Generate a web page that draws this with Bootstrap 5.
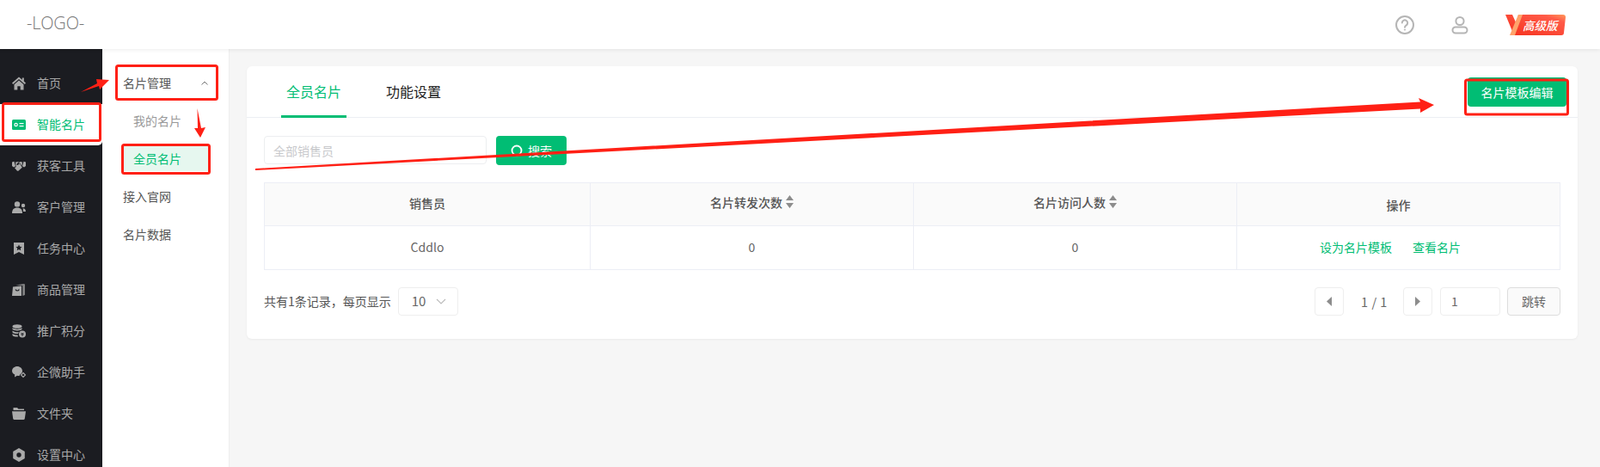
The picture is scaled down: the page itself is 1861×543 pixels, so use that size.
<!DOCTYPE html>
<html lang="en">
<head>
  <meta charset="UTF-8">
  <title>全员名片</title>
  <link href="https://cdn.jsdelivr.net/npm/bootstrap@5.3.3/dist/css/bootstrap.min.css" rel="stylesheet" />
  <style>
    body { width: 1861px; height: 543px; overflow: hidden; position: relative; background: #f6f6f6; font-family: "Noto Sans CJK SC", "Liberation Sans", sans-serif; font-size: 14px; color: #555; }
    .top-bar { height: 57px; background: #fff; box-shadow: 0 1px 5px rgba(0,0,0,.08); position: relative; z-index: 2; padding: 0 40px 0 31px; }
    .logo-text { font-family: "Open Sans", sans-serif; font-size: 20px; color: #777; letter-spacing: -.2px; font-weight: 300; margin-top: -3px; }
    .icon-user { margin-left: 43px; }
    .vip-badge { width: 70px; height: 24px; margin-left: 43px; position: relative; }
    .vip-badge svg { display: block; }
    .vip-text { position: absolute; left: 20px; top: 2px; line-height: 20px; color: #fff; font-size: 13.5px; font-style: italic; font-weight: 500; }
    .app-body { height: 486px; }
    .side-dark { width: 119px; background: #1b1c21; padding-top: 16px; flex: none; }
    .side-item { height: 48px; padding-left: 14px; gap: 13px; color: #a9a9a9; }
    .side-item svg { flex: none; }
    .side-item span { margin-top: -2px; }
    .side-item.is-on { background: #fff; color: #01bd74; border-radius: 0 0 5px 0; }
    .side-sub { width: 148px; background: #fff; border-right: 1px solid #eee; flex: none; padding: 19px 0 0 24px; color: #555; }
    .sub-head { height: 43px; width: 99px; margin-bottom: 5px; padding-bottom: 2px; }
    .sub-link { height: 30px; width: 100px; padding-left: 12px; color: #999; border-radius: 2px; }
    .sub-link.is-on { background: #e6f7ef; color: #01bd74; }
    .sub-mine { height: 32px; margin-bottom: 13px; }
    .sub-plain { height: 44px; }
    .sub-first { margin-top: 7px; }
    .page-main { padding: 20px 26px 0 20px; }
    .panel-card { height: 317px; border: 0; border-radius: 6px; box-shadow: 0 1px 3px rgba(0,0,0,.05); }
    .panel-top { height: 60px; border-bottom: 1px solid #eceef3; padding: 13px 13px 0 40px; }
    .tab-on, .tab-off { height: 60px; margin-top: -13px; font-size: 16px; line-height: 58px; text-align: center; color: #222; }
    .tab-on { width: 76px; color: #01bd74; border-bottom: 3px solid #01bd74; margin-right: 43px; }
    .tab-off { width: 70px; }
    .btn-green { background: #01bd74; border: 0; color: #fff; border-radius: 4px; font-size: 14px; }
    .btn-green:hover { background: #01bd74; color: #fff; }
    .btn-tpl { width: 115px; height: 34px; padding: 1px 0 0; }
    .panel-inner { padding: 21px 20px 0; }
    .search-box { width: 259px; height: 33px; border: 1px solid #eceef0; border-radius: 4px; font-size: 14px; padding: 0 10px; }
    .search-box::placeholder { color: #c8c9cc; }
    .btn-find { width: 82px; height: 34px; margin-left: 11px; padding: 0; gap: 6px; }
    .data-table { table-layout: fixed; width: 1508px; margin: 20px 0 0; border-color: #eceef5; color: #666; }
    .col-seller { width: 379px; }
    .col-mid { width: 376px; }
    .data-table th { height: 50px; background: #fafafa; color: #555; font-weight: 500; text-align: center; vertical-align: middle; padding: 0 0 3px; }
    .data-table th.no-sort { padding: 2px 0 0; }
    .data-table th.has-sort { padding: 0 0 5px; }
    .data-table td { height: 51px; text-align: center; vertical-align: middle; padding: 0 0 2px; color: #666; }
    .data-table td.cell-actions { padding-right: 19px; }
    .sort-mark { display: inline-block; vertical-align: -1px; margin-left: 4px; }
    .green-link { color: #01bd74; text-decoration: none; }
    .pager-row { margin-top: 20px; height: 33px; }
    .box-plain { height: 33px; border: 1px solid #eee; border-radius: 4px; background: #fff; }
    .page-size { width: 70px; margin-left: 8px; padding-left: 15px; font-size: 15px; color: #666; gap: 12px; }
    .page-arrow { width: 34px; }
    .page-info { width: 69px; padding-left: 2px; text-align: center; font-size: 14.5px; color: #666; letter-spacing: .5px; }
    .page-jump { width: 70px; margin-left: 9px; padding-left: 12px; color: #666; }
    .btn-jump { width: 62px; height: 33px; margin-left: 8px; padding: 0; background: #fafafa; border: 1px solid #ddd; border-radius: 4px; font-size: 14px; color: #666; }
    .note-layer { position: absolute; left: 0; top: 0; z-index: 5; pointer-events: none; }
  </style>
</head>
<body>
  <header class="top-bar d-flex align-items-center justify-content-between">
    <div class="logo-text">-LOGO-</div>
    <div class="d-flex align-items-center">
      <svg width="22" height="22" viewBox="0 0 22 22" fill="none" stroke="#b5b5b5" stroke-width="2">
        <circle cx="11" cy="11" r="10"/>
        <path d="M7.8 8.600a3.200 3.200 0 1 1 4.900 2.700c-1.100.7-1.700 1.200-1.700 2.400" stroke-linecap="round"/>
        <circle cx="11" cy="16.600" r=".6" fill="#b5b5b5" stroke-width="1"/>
      </svg>
      <svg class="icon-user" width="20" height="22" viewBox="0 0 20 22" fill="none" stroke="#b5b5b5" stroke-width="2">
        <circle cx="10" cy="6.500" r="4.600"/>
        <rect x="1.500" y="13.500" width="17" height="7" rx="3.500"/>
      </svg>
      <div class="vip-badge">
        <svg width="70" height="24" viewBox="0 0 70 24">
          <defs>
            <linearGradient id="vipFill" x1="0" y1="1" x2="1" y2="0">
              <stop offset="0" stop-color="#f5301c"/>
              <stop offset=".8" stop-color="#ff5a48"/>
              <stop offset="1" stop-color="#ff9a5c"/>
            </linearGradient>
          </defs>
          <path d="M15 0H67a3 3 0 0 1 3 3L68 21a3 3 0 0 1-3 3H10L0 0H8l5 11z" fill="url(#vipFill)"/>
          <path d="M5 24L15 0h5L11 24z" fill="#ffa36b"/>
        </svg>
        <span class="vip-text">高级版</span>
      </div>
    </div>
  </header>

  <div class="app-body d-flex">
    <nav class="side-dark">
      <div class="side-item d-flex align-items-center">
        <svg width="16" height="16" viewBox="0 0 16 16" fill="#aaa"><path d="M8 0.500L0 7.600l1.200 1.300L8 3l6.800 5.900L16 7.600l-2.200-2V1.500h-2v2.300zM2.500 9.300V15.500h3.800v-4.300h3.400v4.300h3.800V9.300L8 4.500z"/></svg>
        <span>首页</span>
      </div>
      <div class="side-item is-on d-flex align-items-center">
        <svg width="16" height="12" viewBox="0 0 16 12"><rect width="16" height="12" rx="1.500" fill="#01bd74"/><circle cx="4.600" cy="6" r="1.700" fill="none" stroke="#fff" stroke-width="1.200"/><path d="M8.500 4h5v1.300h-5zM8.500 7h5v1.300h-5z" fill="#fff"/></svg>
        <span>智能名片</span>
      </div>
      <div class="side-item d-flex align-items-center">
        <svg width="16" height="12" viewBox="0 0 16 12" fill="#aaa"><path d="M0 1.500L2.500.8 4 6.300 2 7.500 0 6z"/><path d="M16 1.500L13.500.8 12 6.300l2 1.200L16 6z"/><path d="M4 1.600C5.500 1.700 6.500 1 8 1L5.600 3.400c-.7.900.5 2 1.500 1.300L8.800 3.300l3 4.400-4.200 3.800c-.6.500-1.300.4-1.800-.1L3 8.200l1.700-1.300z"/><path d="M9 1c1 0 2 .3 3 .6L11.300 6 9 2.400 7.400 3.700z"/></svg>
        <span>获客工具</span>
      </div>
      <div class="side-item d-flex align-items-center">
        <svg width="16" height="14" viewBox="0 0 16 14" fill="#aaa"><circle cx="6" cy="3.400" r="3.200"/><path d="M0 14c0-4.400 2-6.500 6-6.500S12 9.600 12 14z"/><circle cx="13" cy="5" r="2.200"/><path d="M12.600 8.200c2.200 0 3.400 1.300 3.400 3.800h-3c0-1.300-.1-2.600-.4-3.800z"/></svg>
        <span>客户管理</span>
      </div>
      <div class="side-item d-flex align-items-center">
        <svg width="16" height="14" viewBox="0 0 16 14"><path d="M2 0H14V14L8 11 2 14z" fill="#aaa"/><path d="M8 2.600l1.100 2.200 2.400.3-1.700 1.700.4 2.400L8 8l-2.200 1.200.4-2.400-1.700-1.700 2.400-.3z" fill="#1b1c21"/></svg>
        <span>任务中心</span>
      </div>
      <div class="side-item d-flex align-items-center">
        <svg width="16" height="14" viewBox="0 0 16 14"><path d="M1 3.500L11 2.500V14H0z" fill="#aaa"/><path d="M4 1.500L13.500 0 15 .5V13l-2.800 1V2z" fill="#aaa" opacity=".7"/><path d="M4 6.500c.8 2 3.500 2 4.300 0" fill="none" stroke="#1b1c21" stroke-width="1.100"/></svg>
        <span>商品管理</span>
      </div>
      <div class="side-item d-flex align-items-center">
        <svg width="16" height="16" viewBox="0 0 16 16"><ellipse cx="6" cy="2.500" rx="5.500" ry="2.300" fill="#aaa"/><path d="M.5 4.200c1.800 1.900 9.200 1.900 11 0v1.900c-1.800 1.900-9.200 1.900-11 0zM.5 7.500c1.800 1.900 6.500 1.900 7.500 1.500l-1 2c-2.500.2-5.300-.3-6.500-1.500zM.5 11c1.800 1.500 4 1.700 6 1.600l.5 1.900c-3 .2-5.300-.3-6.500-1.500z" fill="#aaa"/><circle cx="12" cy="11.500" r="4" fill="#aaa"/><path d="M10.500 9.800L12 11.300l1.500-1.500M10.300 11.800h3.400M12 11.300v2.600" fill="none" stroke="#1b1c21" stroke-width=".9"/></svg>
        <span>推广积分</span>
      </div>
      <div class="side-item d-flex align-items-center">
        <svg width="16" height="14" viewBox="0 0 16 14"><path d="M6 0c3.300 0 6 2.300 6 5.200 0 1.300-.5 2.300-1.300 3.200C9.500 8.600 9 9.600 9 10.800c-1 .2-2 .1-3-.1L3 12.500l.2-3C1.100 8.500 0 7 0 5.200 0 2.300 2.700 0 6 0z" fill="#aaa"/><path d="M13 7.500l2.500 2.500-2.500 2.500-2.500-2.500z" fill="none" stroke="#aaa" stroke-width="1.100"/></svg>
        <span>企微助手</span>
      </div>
      <div class="side-item d-flex align-items-center">
        <svg width="16" height="14" viewBox="0 0 16 14" fill="#aaa"><path d="M1.500 0H6l1.500 1.600h6.500V3H1.500z"/><path d="M0 4.200h16l-1.200 8.600c-.1.700-.6 1.200-1.300 1.200h-11c-.7 0-1.200-.5-1.300-1.200z"/></svg>
        <span>文件夹</span>
      </div>
      <div class="side-item d-flex align-items-center">
        <svg width="16" height="16" viewBox="0 0 16 16"><path d="M8 0l6.800 3.900v8.200L8 16l-6.800-3.900V3.900z" fill="#aaa"/><circle cx="8" cy="8" r="2.700" fill="#1b1c21"/></svg>
        <span>设置中心</span>
      </div>
    </nav>

    <aside class="side-sub">
      <div class="sub-head d-flex align-items-center justify-content-between">
        <span>名片管理</span>
        <svg width="8" height="5" viewBox="0 0 8 5" fill="none" stroke="#777" stroke-width="1"><path d="M.5 4.500L4 1l3.500 3.500"/></svg>
      </div>
      <div class="sub-link sub-mine d-flex align-items-center">我的名片</div>
      <div class="sub-link is-on d-flex align-items-center">全员名片</div>
      <div class="sub-plain sub-first d-flex align-items-center">接入官网</div>
      <div class="sub-plain d-flex align-items-center">名片数据</div>
    </aside>

    <main class="page-main flex-grow-1">
      <div class="card panel-card">
        <div class="panel-top d-flex justify-content-between align-items-start">
          <div class="d-flex">
            <div class="tab-on">全员名片</div>
            <div class="tab-off">功能设置</div>
          </div>
          <button class="btn btn-green btn-tpl">名片模板编辑</button>
        </div>
        <div class="panel-inner">
          <div class="d-flex align-items-start">
            <input class="form-control search-box" placeholder="全部销售员">
            <button class="btn btn-green btn-find d-flex align-items-center justify-content-center">
              <svg width="14" height="14" viewBox="0 0 14 14" fill="none" stroke="#fff" stroke-width="1.800"><circle cx="7" cy="7" r="5.500"/></svg>
              <span>搜索</span>
            </button>
          </div>
          <table class="table table-bordered data-table">
            <colgroup>
              <col class="col-seller">
              <col class="col-mid">
              <col class="col-mid">
              <col>
            </colgroup>
            <thead>
              <tr>
                <th>销售员</th>
                <th class="has-sort">名片转发次数<svg class="sort-mark" width="9" height="15" viewBox="0 0 9 15" fill="#8c8c8c"><path d="M4.500 0L9 6H0zM0 9h9l-4.500 6z"/></svg></th>
                <th class="has-sort">名片访问人数<svg class="sort-mark" width="9" height="15" viewBox="0 0 9 15" fill="#8c8c8c"><path d="M4.500 0L9 6H0zM0 9h9l-4.500 6z"/></svg></th>
                <th class="no-sort">操作</th>
              </tr>
            </thead>
            <tbody>
              <tr>
                <td>Cddlo</td>
                <td>0</td>
                <td>0</td>
                <td class="cell-actions"><a class="green-link me-4" href="#">设为名片模板</a><a class="green-link" href="#">查看名片</a></td>
              </tr>
            </tbody>
          </table>
          <div class="pager-row d-flex align-items-center justify-content-between">
            <div class="d-flex align-items-center">
              <span>共有1条记录，每页显示</span>
              <div class="box-plain page-size d-flex align-items-center">
                <span>10</span>
                <svg width="12" height="7" viewBox="0 0 12 7" fill="none" stroke="#bbb" stroke-width="1.200"><path d="M1 1l5 5 5-5"/></svg>
              </div>
            </div>
            <div class="d-flex align-items-center">
              <div class="box-plain page-arrow d-flex align-items-center justify-content-center">
                <svg width="6" height="11" viewBox="0 0 6 11" fill="#8c8c8c"><path d="M6 0v11L0 5.500z"/></svg>
              </div>
              <div class="page-info">1 / 1</div>
              <div class="box-plain page-arrow d-flex align-items-center justify-content-center">
                <svg width="6" height="11" viewBox="0 0 6 11" fill="#8c8c8c"><path d="M0 0v11l6-5.500z"/></svg>
              </div>
              <div class="box-plain page-jump d-flex align-items-center">1</div>
              <button class="btn btn-jump">跳转</button>
            </div>
          </div>
        </div>
      </div>
    </main>
  </div>

  <svg class="note-layer" width="1861" height="543" viewBox="0 0 1861 543">
    <g fill="none" stroke="#ff2015" stroke-width="3">
      <rect x="3.500" y="120.500" width="113" height="43" rx="2"/>
      <rect x="135.500" y="76.500" width="117" height="39" rx="2"/>
      <rect x="142.500" y="168.500" width="101" height="33" rx="2"/>
      <rect x="1704.500" y="93" width="119" height="40" rx="2"/>
    </g>
    <g fill="#ff2015">
      <path d="M94 107L113 97 112 92 127 93 116 104 115 100z"/>
      <path d="M229.500 126L234 149 239 148 233 160 226 149 230 149z"/>
      <path d="M297 196L1652 118.500 1650 114 1668 122 1652 131 1652 126.500 297 198z"/>
    </g>
  </svg>

  <script src="https://cdn.jsdelivr.net/npm/bootstrap@5.3.3/dist/js/bootstrap.bundle.min.js"></script>
</body>
</html>
